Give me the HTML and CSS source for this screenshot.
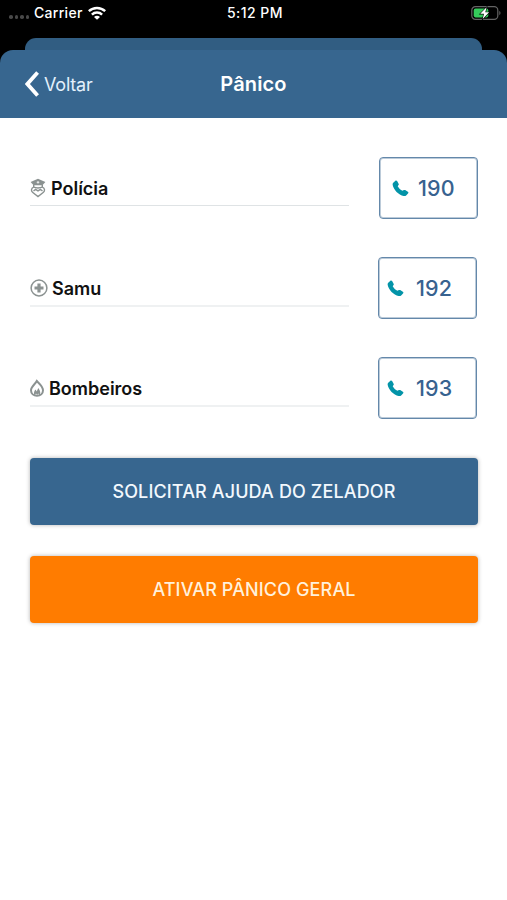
FILE: index.html
```
<!DOCTYPE html>
<html lang="pt-BR">
<head>
    <meta charset="UTF-8">
    <meta name="viewport" content="width=device-width, initial-scale=1.0">
    <title>Pânico</title>
    <link rel="stylesheet" href="styles.css">
</head>
<body>

    <!-- Status bar -->
    <div class="status-bar">
        <div class="status-left">
            <div class="signal"><i></i><i></i><i></i><i></i></div>
            <span class="carrier">Carrier</span>
            <svg class="wifi" viewBox="0 0 18 14" width="18" height="14">
                <g fill="none" stroke="#fff" stroke-width="2.5">
                    <path d="M.8 5.2C5.3 .9 12.7 .9 17.2 5.2"/>
                    <path d="M3.9 8.6C6.7 5.9 11.3 5.9 14.1 8.6"/>
                </g>
                <path fill="#fff" d="M9 13.8L6 10.9C7.7 9.3 10.3 9.3 12 10.9Z"/>
            </svg>
        </div>
        <span class="clock">5:12 PM</span>
        <svg class="battery" viewBox="0 0 30 14" width="30" height="14">
            <rect x=".8" y=".7" width="26" height="12.6" rx="3.6" fill="none" stroke="#646464" stroke-width="1.2"/>
            <path d="M28.3 4.8C29.9 5.5 29.9 8.5 28.3 9.2Z" fill="#646464"/>
            <rect x="2.7" y="2.6" width="14.6" height="8.8" rx="1.8" fill="#35cb5b"/>
            <path d="M15.6 1.3L9.2 7.8H13L11.7 12.9L18.1 6.3H14.3Z" fill="#fff" stroke="#000" stroke-width="1.2" paint-order="stroke"/>
        </svg>
    </div>

    <div class="sheet-behind"></div>

    <header>
        <a class="back">
            <svg viewBox="0 0 14 26" width="14" height="26">
                <path d="M12.6 1.5L2.4 13L12.6 24.5" fill="none" stroke="#fff" stroke-width="3.8"/>
            </svg>
            <span>Voltar</span>
        </a>
        <h1>Pânico</h1>
    </header>

    <div class="container">

        <!-- Emergency numbers -->
        <div class="row">
            <div class="label">
                <svg viewBox="0 0 16 20" width="16" height="20" fill="none" stroke="#8b9291" stroke-width="1.4">
                    <path d="M8 .8L15.4 3.9L12.4 7.3H3.6L.6 3.9Z" fill="#8b9291" stroke="none"/>
                    <path d="M8 3V5.6M6.7 4.3H9.3" stroke="#fff" stroke-width=".8"/>
                    <path d="M3.7 6.8V9.2C5.8 10.2 10.2 10.2 12.3 9.2V6.8"/>
                    <path d="M3.6 9.2C1 10.2 1 13 2.5 14.2L8 18.5L13.5 14.2C15 13 15 10.2 12.4 9.2"/>
                    <path d="M3.5 13L5.6 11.4L8 12.9L10.4 11.4L12.5 13"/>
                </svg>
                <span>Polícia</span>
            </div>
            <button class="call">
                <svg viewBox="0 0 17 17" width="17" height="17"><path d="M1.5 2.4L3.4 .8C4 .3 4.7 .5 5.1 1.1L6.6 3.7C7 4.4 6.8 5 6.2 5.4L5.7 6.2C6.6 8 8.6 10 10.5 10.8L11.4 10.3C12 9.8 12.6 9.8 13.2 10.1L15.8 11.8C16.5 12.2 16.6 12.9 16 13.5L14.4 15.2C13.7 15.9 12.7 16.2 11.6 16C6.6 15 1.5 9.8 .7 5C.5 3.9 .8 3 1.5 2.4Z"/></svg>
                <span>190</span>
            </button>
        </div>
        <div class="row shifted">
            <div class="label">
                <svg viewBox="0 0 18 20" width="18" height="20">
                    <circle cx="9" cy="10" r="7.9" fill="none" stroke="#8b9291" stroke-width="1.5"/>
                    <path d="M9 5.5V14.5M4.5 10H13.5" stroke="#8b9291" stroke-width="3.2"/>
                </svg>
                <span>Samu</span>
            </div>
            <button class="call">
                <svg viewBox="0 0 17 17" width="17" height="17"><path d="M1.5 2.4L3.4 .8C4 .3 4.7 .5 5.1 1.1L6.6 3.7C7 4.4 6.8 5 6.2 5.4L5.7 6.2C6.6 8 8.6 10 10.5 10.8L11.4 10.3C12 9.8 12.6 9.8 13.2 10.1L15.8 11.8C16.5 12.2 16.6 12.9 16 13.5L14.4 15.2C13.7 15.9 12.7 16.2 11.6 16C6.6 15 1.5 9.8 .7 5C.5 3.9 .8 3 1.5 2.4Z"/></svg>
                <span>192</span>
            </button>
        </div>
        <div class="row shifted">
            <div class="label">
                <svg viewBox="0 0 14 20" width="14" height="20">
                    <path d="M6.8 3C8.6 5.2 13 8.3 13 12.3C13 15.8 10.4 17.8 7 17.8S1 15.8 1 12.3C1 8.6 5.4 5.9 6.8 3Z" fill="none" stroke="#8b9291" stroke-width="2"/>
                    <path d="M4.6 17.8C3.4 15.4 4 13.1 5.6 11.6L6.7 13.4L8.3 10C10.6 12.9 10.9 15.7 9.4 17.8L8.4 15.6L7.1 17L6 15.4Z" fill="#8b9291"/>
                </svg>
                <span class="wide">Bombeiros</span>
            </div>
            <button class="call">
                <svg viewBox="0 0 17 17" width="17" height="17"><path d="M1.5 2.4L3.4 .8C4 .3 4.7 .5 5.1 1.1L6.6 3.7C7 4.4 6.8 5 6.2 5.4L5.7 6.2C6.6 8 8.6 10 10.5 10.8L11.4 10.3C12 9.8 12.6 9.8 13.2 10.1L15.8 11.8C16.5 12.2 16.6 12.9 16 13.5L14.4 15.2C13.7 15.9 12.7 16.2 11.6 16C6.6 15 1.5 9.8 .7 5C.5 3.9 .8 3 1.5 2.4Z"/></svg>
                <span>193</span>
            </button>
        </div>

        <!-- Actions -->
        <button class="action help">SOLICITAR AJUDA DO ZELADOR</button>
        <button class="action panic">ATIVAR PÂNICO GERAL</button>

    </div>

</body>
</html>
```
FILE: styles.css
```
body {
    font-family: Inter, "Liberation Sans", sans-serif;
    margin: 0;
    background-color: #000;
    height: 900px;
    display: flex;
    flex-direction: column;
    overflow: hidden;
}
button {
    font-family: inherit;
    box-sizing: border-box;
    padding: 0;
    cursor: pointer;
}
.status-bar {
    height: 38px;
    box-sizing: border-box;
    padding: 0 6px 12px 9px;
    display: grid;
    grid-template-columns: 1fr auto 1fr;
    align-items: center;
    color: #fff;
    font-size: 14px;
    line-height: 16px;
    font-weight: 500;
}
.status-left {
    display: flex;
    align-items: center;
}
.signal {
    display: flex;
    gap: 2px;
    width: 25px;
    padding-top: 8px;
}
.signal i {
    width: 3.5px;
    height: 3.5px;
    border-radius: 50%;
    background-color: #484848;
}
.carrier {
    letter-spacing: 0.3px;
}
.wifi {
    margin-left: 5px;
}
.clock {
    letter-spacing: 0.45px;
}
.battery {
    justify-self: end;
}
.sheet-behind {
    height: 12px;
    margin: 0 25px;
    border-radius: 11px 11px 0 0;
    background-color: #315d82;
}
header {
    height: 68px;
    padding: 0 25px;
    display: grid;
    grid-template-columns: 1fr auto 1fr;
    align-items: center;
    background-color: #37668f;
    border-radius: 13px 13px 0 0;
    color: #fff;
}
.back {
    display: flex;
    align-items: center;
    gap: 5px;
    color: #e3f1fc;
    font-size: 18px;
    letter-spacing: -0.2px;
}
h1 {
    margin: 0;
    font-size: 20px;
    font-weight: 600;
    letter-spacing: 0.15px;
}
.container {
    flex: 1;
    padding: 39px 29px 0 30px;
    background-color: #fff;
}
.row {
    display: flex;
    justify-content: space-between;
    align-items: flex-start;
    height: 62px;
    margin-bottom: 38px;
}
.row.shifted {
    padding-right: 1px;
}
.label {
    width: 319px;
    height: 49px;
    padding-top: 14px;
    box-sizing: border-box;
    border-bottom: 1px solid #dfe3e5;
    display: flex;
    align-items: center;
    gap: 5px;
    color: #111;
    font-size: 18px;
    font-weight: 600;
}
.shifted .label {
    height: 50px;
    padding-top: 14px;
    border-bottom: 2px solid #eff1f2;
    gap: 4px;
}
.label .wide {
    margin-left: 1px;
}
.call {
    width: 99px;
    height: 62px;
    padding-left: 12px;
    display: flex;
    align-items: center;
    gap: 9px;
    background-color: #fff;
    border: 1px solid #6488aa;
    border-radius: 4px;
    box-shadow: inset 0 0 0 1px #bccbd9;
    color: #37628f;
    font-size: 21.5px;
    font-weight: 500;
    letter-spacing: 0.2px;
}
.shifted .call {
    padding-left: 8px;
    gap: 12px;
}
.call svg {
    fill: #0394a8;
}
.action {
    display: block;
    width: 100%;
    height: 67px;
    margin-bottom: 31px;
    border: none;
    border-radius: 4px;
    box-shadow: 0 0 4px rgba(0,0,0,0.3);
    color: #f2f8fd;
    font-size: 18px;
    font-weight: 500;
    letter-spacing: 0.13px;
}
.help {
    margin-top: 39px;
    background-color: #37668f;
}
.panic {
    background-color: #ff7c00;
    color: #fff1dc;
}
```
